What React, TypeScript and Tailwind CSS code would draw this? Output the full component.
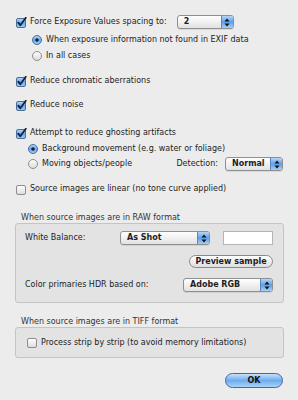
import React from "react";

function CheckOn() {
  return (
    <svg width="11" height="11" viewBox="0 0 11 11" className="shrink-0">
      <defs>
        <linearGradient id="cbg" x1="0" y1="0" x2="0" y2="1">
          <stop offset="0" stopColor="#bcd9f7" />
          <stop offset="0.5" stopColor="#6aa8ec" />
          <stop offset="1" stopColor="#9fcbf6" />
        </linearGradient>
      </defs>
      <rect x="0.5" y="1.5" width="9" height="9" rx="1.5" fill="url(#cbg)" stroke="#4a6f9c" strokeWidth="1" />
      <path d="M2.3 5.6 L4.3 8.2 L9.8 0.8" fill="none" stroke="#14223a" strokeWidth="1.8" strokeLinecap="round" strokeLinejoin="round" />
    </svg>
  );
}

function CheckOff() {
  return (
    <svg width="11" height="11" viewBox="0 0 11 11" className="shrink-0">
      <defs>
        <linearGradient id="cbo" x1="0" y1="0" x2="0" y2="1">
          <stop offset="0" stopColor="#ffffff" />
          <stop offset="1" stopColor="#dcdcdc" />
        </linearGradient>
      </defs>
      <rect x="0.5" y="1.5" width="9" height="9" rx="1.5" fill="url(#cbo)" stroke="#8e8e8e" strokeWidth="1" />
    </svg>
  );
}

function Radio({ on }: { on: boolean }) {
  return (
    <svg width="10" height="10" viewBox="0 0 10 10" className="shrink-0">
      <defs>
        <linearGradient id="rbg" x1="0" y1="0" x2="0" y2="1">
          <stop offset="0" stopColor="#bcd9f7" />
          <stop offset="0.5" stopColor="#6aa8ec" />
          <stop offset="1" stopColor="#a6cff7" />
        </linearGradient>
        <linearGradient id="rbo" x1="0" y1="0" x2="0" y2="1">
          <stop offset="0" stopColor="#ffffff" />
          <stop offset="1" stopColor="#dadada" />
        </linearGradient>
      </defs>
      <circle cx="5" cy="5" r="4.5" fill={on ? "url(#rbg)" : "url(#rbo)"} stroke={on ? "#4a6f9c" : "#8e8e8e"} strokeWidth="1" />
      {on && <circle cx="5" cy="5" r="1.8" fill="#14223a" />}
    </svg>
  );
}

function Popup({ label, w }: { label: string; w: string }) {
  return (
    <div className={`flex h-[14px] ${w} shrink-0 overflow-hidden rounded-[3px] border border-[#8f8f8f] bg-gradient-to-b from-[#ffffff] to-[#e2e2e2] shadow-[0_1px_0_rgba(0,0,0,0.08)]`}>
      <div className="flex flex-1 items-center pl-[6px] text-[8px] font-bold leading-none text-[#1e1e1e]">{label}</div>
      <div className="flex w-[12px] items-center justify-center border-l border-[#5a86bd] bg-gradient-to-b from-[#b6d6f8] via-[#5d9fe8] to-[#a7cff7]">
        <svg width="6" height="9" viewBox="0 0 6 9">
          <path d="M3 0.5 L5.5 3.5 L0.5 3.5 Z" fill="#111" />
          <path d="M3 8.5 L5.5 5.5 L0.5 5.5 Z" fill="#111" />
        </svg>
      </div>
    </div>
  );
}

export default function App() {
  return (
    <div
      className="relative flex h-[400px] w-[298px] flex-col bg-[#ececec] text-[8px] leading-none text-[#1c1c1c]"
      style={{ fontFamily: '"DejaVu Sans", Verdana, sans-serif' }}
    >
      <div className="flex flex-col pl-[16px] pt-[14px]">
        <div className="flex h-[16px] items-center">
          <CheckOn />
          <span className="ml-[3px]">Force Exposure Values spacing to:</span>
          <div className="ml-[10px]">
            <Popup label="2" w="w-[57px]" />
          </div>
        </div>
        <div className="mt-[2px] flex h-[16px] items-center pl-[16px]">
          <Radio on={true} />
          <span className="ml-[4px]">When exposure information not found in EXIF data</span>
        </div>
        <div className="flex h-[16px] items-center pl-[16px]">
          <Radio on={false} />
          <span className="ml-[4px]">In all cases</span>
        </div>
        <div className="mt-[9px] flex h-[16px] items-center">
          <CheckOn />
          <span className="ml-[3px]">Reduce chromatic aberrations</span>
        </div>
        <div className="mt-[8px] flex h-[16px] items-center">
          <CheckOn />
          <span className="ml-[3px]">Reduce noise</span>
        </div>
        <div className="mt-[12px] flex h-[16px] items-center">
          <CheckOn />
          <span className="ml-[3px]">Attempt to reduce ghosting artifacts</span>
        </div>
        <div className="flex h-[16px] items-center pl-[12px]">
          <Radio on={true} />
          <span className="ml-[4px]">Background movement (e.g. water or foliage)</span>
        </div>
        <div className="-mt-[1px] flex h-[16px] items-center pl-[12px] pr-[15px]">
          <Radio on={false} />
          <span className="ml-[4px]">Moving objects/people</span>
          <span className="ml-auto mr-[7px]">Detection:</span>
          <Popup label="Normal" w="w-[58px]" />
        </div>
        <div className="mt-[9px] flex h-[16px] items-center">
          <CheckOff />
          <span className="ml-[3px]">Source images are linear (no tone curve applied)</span>
        </div>
      </div>

      <div className="mt-[15px] pl-[21px] text-[#333] leading-[11px]">When source images are in RAW format</div>
      <div className="ml-[15px] flex h-[80px] w-[269px] flex-col rounded-[3px] border border-[#c4c4c4] bg-[#e3e3e3] pl-[9px] pr-[10px] pt-[7px]">
        <div className="flex h-[14px] items-center">
          <span>White Balance:</span>
          <div className="ml-auto">
            <Popup label="As Shot" w="w-[90px]" />
          </div>
          <div className="ml-[13px] h-[14px] w-[50px] border border-[#b5b5b5] bg-white" />
        </div>
        <div className="mt-[10px] flex h-[13px] justify-end">
          <div className="flex h-[13px] w-[84px] items-center justify-center rounded-full border border-[#8a8a8a] bg-gradient-to-b from-[#ffffff] to-[#dedede] font-bold">
            Preview sample
          </div>
        </div>
        <div className="mt-[10px] flex h-[14px] items-center">
          <span>Color primaries HDR based on:</span>
          <div className="ml-auto">
            <Popup label="Adobe RGB" w="w-[90px]" />
          </div>
        </div>
      </div>

      <div className="mt-[13px] pl-[21px] text-[#333] leading-[11px]">When source images are in TIFF format</div>
      <div className="ml-[15px] flex h-[31px] w-[269px] items-center rounded-[3px] border border-[#c4c4c4] bg-[#e3e3e3] pl-[11px]">
        <CheckOff />
        <span className="ml-[3px]">Process strip by strip (to avoid memory limitations)</span>
      </div>

      <div className="mt-[15px] flex pr-[15px] justify-end">
        <div className="flex h-[15px] w-[58px] items-center justify-center rounded-full border border-[#3d6aa8] bg-gradient-to-b from-[#c6e0fb] via-[#6fabec] to-[#a9d2f8] font-bold text-[#111]">
          OK
        </div>
      </div>
    </div>
  );
}
